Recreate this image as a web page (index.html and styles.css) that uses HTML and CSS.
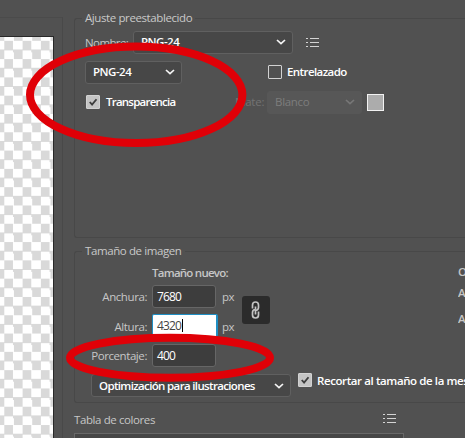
FILE: index.html
```html
<!DOCTYPE html>
<html lang="es">
<head>
<meta charset="utf-8">
<title>Exportar para Web</title>
<link rel="stylesheet" href="styles.css">
</head>
<body>
<main class="dialog">
  <aside class="preview"><div class="checker"></div></aside>
  <section class="settings">
    <div class="group preset">
      <h2 class="legend">Ajuste preestablecido</h2>
      <div class="row name-row">
        <span class="label">Nombre:</span>
        <div class="select name-select"><span>PNG-24</span><svg class="chevron" viewBox="0 0 10 6"><path d="M1 1l4 3.7L9 1"/></svg></div>
        <svg class="list" viewBox="0 0 13 9"><path d="M0 .5h2M4 .5h9M0 4.5h2M4 4.5h9M0 8.5h2M4 8.5h9"/></svg>
      </div>
      <div class="row format-row">
        <div class="select format-select"><span>PNG-24</span><svg class="chevron" viewBox="0 0 10 6"><path d="M1 1l4 3.7L9 1"/></svg></div>
        <span class="box"></span><span class="strong interlace">Entrelazado</span>
      </div>
      <div class="row alpha-row">
        <span class="box checked"><svg viewBox="0 0 13 13"><path d="M3 6.5l2.5 2.8L10.3 3.5"/></svg></span>
        <span class="strong alpha">Transparencia</span>
        <span class="matte">Mate:</span>
        <div class="select matte-select"><span>Blanco</span><svg class="chevron" viewBox="0 0 10 6"><path d="M1 1l4 3.7L9 1"/></svg></div>
        <span class="swatch"></span>
      </div>
    </div>
    <div class="group size">
      <h2 class="legend">Tamaño de imagen</h2>
      <div class="size-body">
        <div class="fields">
          <span class="label heading">Tamaño nuevo:</span>
          <span class="label key">Anchura:</span><span class="input">7680</span><span class="label unit">px</span>
          <span class="label key">Altura:</span><span class="input focused">4320<i class="caret"></i></span><span class="label unit">px</span>
          <span class="label key">Porcentaje:</span><span class="input">400</span>
        </div>
        <span class="link"><svg viewBox="0 0 27 27"><path d="M10.5 12V8.5a3 3 0 0 1 6 0v2.5a3 3 0 0 1-3 3M16.5 15v3.5a3 3 0 0 1-6 0V16a3 3 0 0 1 3-3M13.5 10v3M13.5 14v4"/></svg></span>
        <div class="original label"><span>Original</span><span>Anchura:</span><span>Altura:</span></div>
      </div>
      <div class="row optimize-row">
        <div class="select optimize-select"><span>Optimización para ilustraciones</span><svg class="chevron" viewBox="0 0 10 6"><path d="M1 1l4 3.7L9 1"/></svg></div>
        <span class="box checked"><svg viewBox="0 0 13 13"><path d="M3 6.5l2.5 2.8L10.3 3.5"/></svg></span>
        <span class="strong crop">Recortar al tamaño de la mesa</span>
      </div>
    </div>
    <div class="row colors-row"><span class="label colors">Tabla de colores</span><svg class="list" viewBox="0 0 13 9"><path d="M0 .5h2M4 .5h9M0 4.5h2M4 4.5h9M0 8.5h2M4 8.5h9"/></svg></div>
    <div class="table"></div>
  </section>
  <svg class="marks" viewBox="0 0 465 438">
    <ellipse cx="136.2" cy="94.8" rx="106.2" ry="48.2"/>
    <ellipse cx="170" cy="357.8" rx="100" ry="20"/>
  </svg>
</main>
</body>
</html>
```

FILE: styles.css
```css
* { box-sizing: border-box; }
body { margin: 0; background: #515151; font: 12px/16px "Open Sans", "Noto Sans", sans-serif; color: #fff; }
.dialog { position: relative; width: 465px; height: 438px; overflow: hidden; display: flex; }
.preview { flex: none; width: 63px; margin-top: 17px; padding-top: 18px; border-right: 1px solid #494949; border-top: 1px solid #4b4b4b; }
.checker {
  width: 54px; height: 402px; border-top: 1px solid #292929; border-right: 1px solid #292929;
  background: conic-gradient(#fff 25%, #d9d9d9 0 50%, #fff 0 75%, #d9d9d9 0) 4.3px 3.8px / 18.3px 18.3px;
}
.settings { flex: none; width: 402px; padding: 18px 0 0 11px; }
.group { border: 1px solid #484848; border-right: 0; border-radius: 3px 0 0 3px; }
.preset { height: 220px; }
.size { height: 152px; margin-top: 13px; }
.legend { width: fit-content; height: 16px; margin: -9px 0 1px 7px; padding: 0 3px; background: #515151; font-size: 11.5px; line-height: 16px; font-weight: 500; color: #c9c9c9; letter-spacing: -.4px; white-space: nowrap; }
.row { display: flex; align-items: center; white-space: nowrap; }
.label { color: #c6c6c6; font-size: 11.5px; font-weight: 500; letter-spacing: -.42px; white-space: nowrap; }
.strong { font-size: 11.5px; font-weight: 600; letter-spacing: -.4px; }
.select { display: flex; align-items: center; justify-content: space-between; height: 23px; padding: 0 6px 1px 7px; border: 1px solid #606060; border-radius: 3px; background: #474747; font-size: 11.5px; font-weight: 600; letter-spacing: -.5px; }
.chevron { flex: none; width: 10px; height: 6px; fill: none; stroke: #f5f5f5; stroke-width: 1.7; }
.list { flex: none; width: 13px; height: 9px; fill: none; stroke: #d4d4d4; stroke-width: 1; }
.name-row { height: 23px; margin: 5px 0 0 10px; }
.name-row .label { width: 48px; letter-spacing: -.6px; }
.name-select { width: 160px; }
.name-row .list { margin-left: 13px; }
.format-row { margin: 7px 0 0 10px; }
.format-select { width: 97px; }
.box { flex: none; width: 14px; height: 14px; border: 1px solid #d2d2d2; border-radius: 1px; }
.format-row .box { margin: -1px 0 0 86px; }
.interlace { margin: -1px 0 0 5px; letter-spacing: -.58px; }
.checked { background: #c4c4c4; }
.box svg { display: block; width: 12px; height: 12px; fill: none; stroke: #3d3d3d; stroke-width: 2; }
.alpha-row { margin: 6px 0 0 11px; height: 24px; }
.alpha { width: 129px; margin-left: 6px; letter-spacing: -.77px; }
.matte { width: 32px; color: #737373; font-size: 11.5px; letter-spacing: -.2px; }
.matte-select { width: 95px; border-color: #575757; background: #575757; color: #7d7d7d; font-weight: 400; letter-spacing: -.3px; }
.matte-select .chevron { stroke: #777; }
.swatch { width: 17px; height: 17px; margin-left: 5px; border: 1px solid #f2f2f2; background: #acacac; }
.size-body { display: flex; height: 113px; }
.fields { display: grid; grid-template-columns: 72px 69px 22px; grid-template-rows: 18.5px 24px 24px 24px; row-gap: 5.5px; align-content: start; align-items: center; }
.heading { grid-column: 1 / -1; align-self: start; margin: 5px 0 0 77px; font-weight: 600; }
.heading.label { letter-spacing: -.75px; }
.key { padding-top: 2px; text-align: right; }
.input { height: 23px; margin-left: 5px; padding-left: 4px; border: 1px solid #666; border-radius: 3px; background: #3d3d3d; font-size: 12px; line-height: 21px; letter-spacing: -.9px; }
.focused { width: 66px; height: 23px; border: 2px solid #1f8fc4; border-width: 1px 2px 1px 1px; border-radius: 2px; background: #fff; color: #444; }
.caret { display: inline-block; width: 1px; height: 13px; margin-left: 1px; background: #000; vertical-align: -2px; }
.unit { padding: 2px 0 0 6px; }
.link { flex: none; width: 28px; height: 28px; margin: 36px 0 0 4px; border-radius: 3px; background: #2b2b2b; }
.link svg { display: block; width: 27px; height: 28px; fill: none; stroke: #c4c4c4; stroke-width: 1.7; }
.original { display: grid; grid-template-rows: 16px 16px 16px; row-gap: 5px; align-content: start; width: 7px; margin: 4px 0 0 188px; overflow: hidden; font-weight: 600; }
.original span:last-child { margin-top: 5px; }
.optimize-row { margin: 1px 0 0 16px; }
.optimize-select { flex: none; width: 200px; padding-bottom: 0; letter-spacing: -.65px; }
.optimize-row .box { margin: -11px 0 0 7px; }
.crop { margin: -9px 0 0 5px; }
.colors-row { margin-top: 8px; height: 18px; }
.colors { width: 309px; letter-spacing: -.4px; }
.colors-row .list { margin-top: -3px; }
.table { width: 330px; height: 20px; margin-top: 4px; border: 1px solid #686868; background: #464646; }
.marks { position: absolute; inset: 0; width: 465px; height: 438px; fill: none; stroke: #e00007; stroke-width: 8; }
```
